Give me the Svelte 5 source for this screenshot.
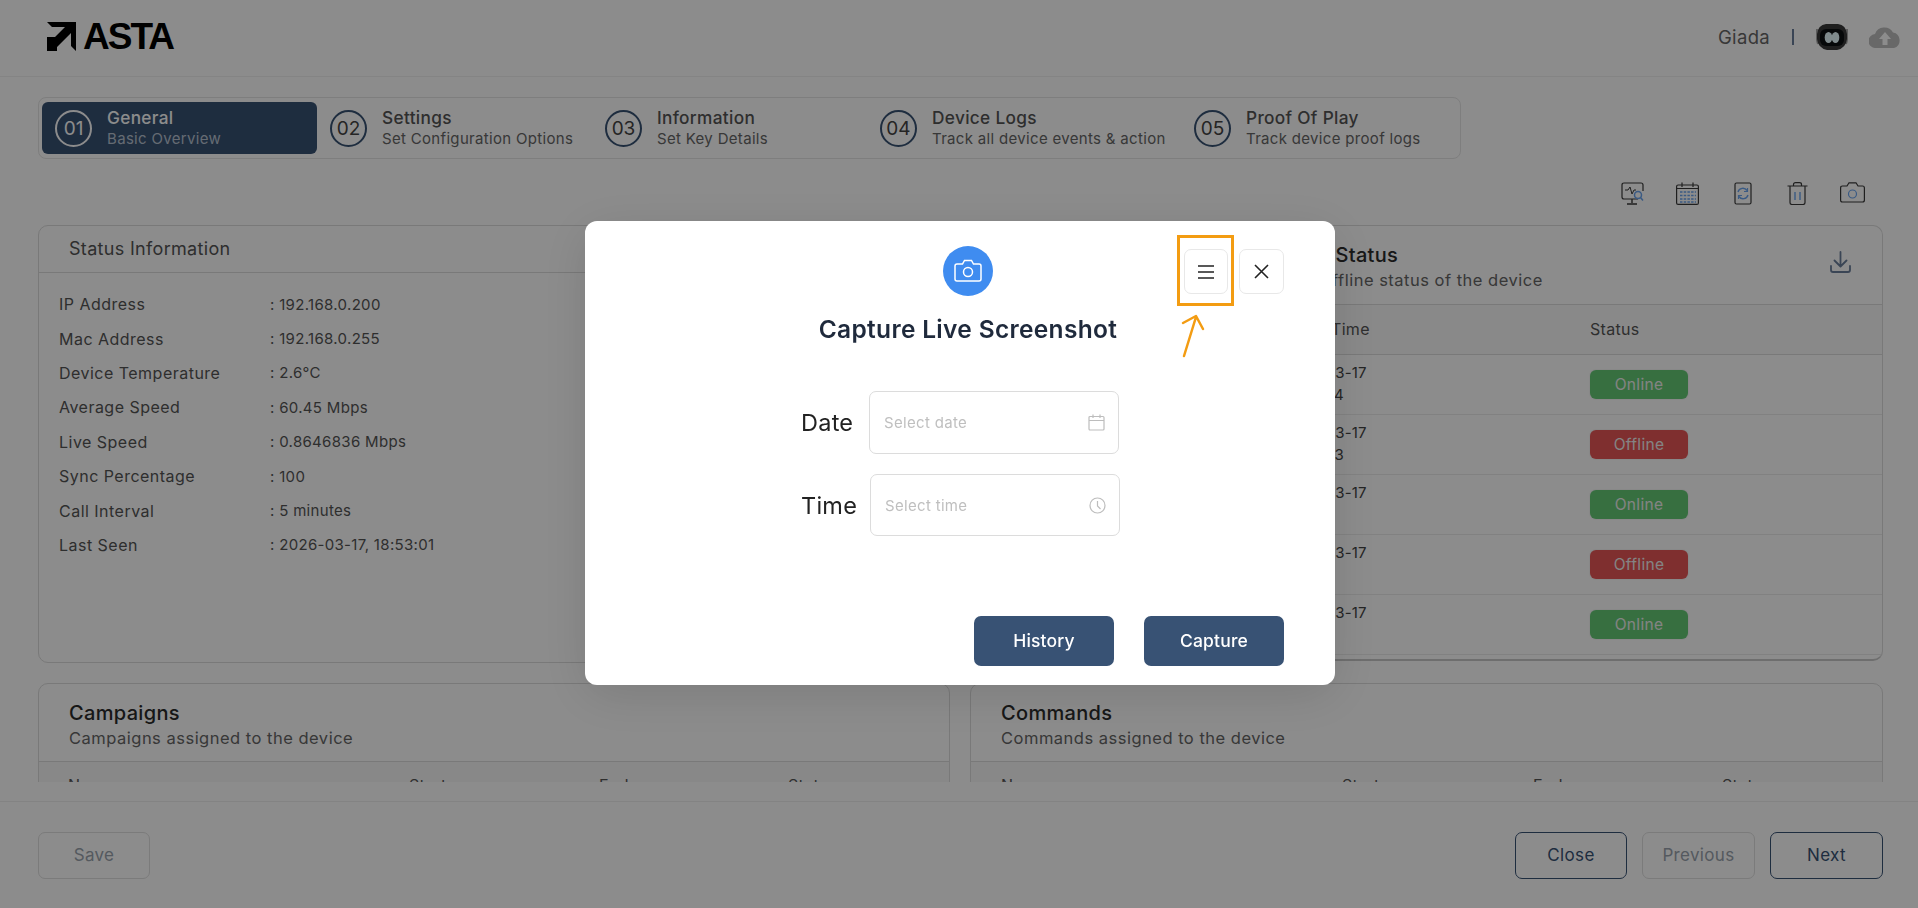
<script>
  const steps = [
    { n: '01', t: 'General', s: 'Basic Overview', w: 275, active: true },
    { n: '02', t: 'Settings', s: 'Set Configuration Options', w: 275 },
    { n: '03', t: 'Information', s: 'Set Key Details', w: 275 },
    { n: '04', t: 'Device Logs', s: 'Track all device events & action', w: 314 },
    { n: '05', t: 'Proof Of Play', s: 'Track device proof logs', w: 262 }
  ];
  const info = [
    ['IP Address', ': 192.168.0.200'],
    ['Mac Address', ': 192.168.0.255'],
    ['Device Temperature', ': 2.6°C'],
    ['Average Speed', ': 60.45 Mbps'],
    ['Live Speed', ': 0.8646836 Mbps'],
    ['Sync Percentage', ': 100'],
    ['Call Interval', ': 5 minutes'],
    ['Last Seen', ': 2026-03-17, 18:53:01']
  ];
  const rows = [
    { d: '2026-03-17', t: '18:53:04', on: true },
    { d: '2026-03-17', t: '18:48:03', on: false },
    { d: '2026-03-17', t: '18:43', on: true },
    { d: '2026-03-17', t: '18:38', on: false },
    { d: '2026-03-17', t: '18:33', on: true }
  ];
</script>

<div class="page">
  <header class="top">
    <div class="logo">
      <svg width="31" height="30" viewBox="0 0 31 30"><path d="M1 0H30V29L25 24V11L11 25V29H1V15H9L19 5H6Z" fill="#000"/></svg>
      <span class="brand">ASTA</span>
    </div>
    <div class="user">
      <span class="uname">Giada</span>
      <span class="sep"></span>
      <svg class="avatar" width="32" height="26" viewBox="0 0 32 26">
        <path d="M1 5 Q0 14 2 20 M31 5 Q32 14 30 20" stroke="#a8a8a8" stroke-width="2" fill="none"/>
        <path d="M10 0H22Q30 1 31 10V15Q30 24 21 26H11Q2 24 1 15V10Q2 1 10 0Z" fill="#3a3a3a"/>
        <rect x="4" y="5" width="24" height="17" rx="6" fill="#0c0f12"/>
        <ellipse cx="12.500" cy="13.500" rx="3.800" ry="5.500" fill="#e8fbff"/>
        <ellipse cx="19.500" cy="13.500" rx="3.800" ry="5.500" fill="#e8fbff"/>
      </svg>
      <svg class="cloud" width="32" height="22" viewBox="0 0 32 22">
        <path d="M7 22A7 7 0 0 1 6 8 10 10 0 0 1 24 6.500 8 8 0 0 1 25 22Z" fill="#bdbdbd"/>
        <path d="M16 6L22 13H18.500V19H13.500V13H10Z" fill="#fff"/>
      </svg>
    </div>
  </header>

  <main class="scroll">
    <nav class="stepper">
      {#each steps as s}
        <div class="step" class:active={s.active} style="width:{s.w}px">
          <span class="num">{s.n}</span>
          <span class="stxt"><b>{s.t}</b><small>{s.s}</small></span>
        </div>
      {/each}
    </nav>

    <div class="tools">
      <svg width="23" height="24" viewBox="0 0 23 24" fill="none" stroke="#3a3a3a" stroke-width="1.2">
        <path d="M17 17H3Q1 17 1 15V3Q1 1 3 1H20Q22 1 22 3V9"/>
        <path d="M4 8H7L9 5L11 12L13 8H15" stroke-width="1"/>
        <path d="M11 17V21M6 22H16" stroke-width="1.400"/>
        <circle cx="17" cy="13" r="3.500" stroke="#6aa5f0" stroke-width="1.500"/>
        <path d="M19.500 15.500L22 18.500" stroke="#6aa5f0" stroke-width="1.500"/>
      </svg>
      <svg width="23" height="23" viewBox="0 0 23 23" fill="none" stroke="#3a3a3a" stroke-width="1.200">
        <rect x="0.600" y="3" width="21.800" height="19.400" rx="1.500"/>
        <path d="M6 0.500V5M17 0.500V5M1 6.500H22"/>
        <g stroke="#6aa5f0" stroke-width="1.300" stroke-dasharray="2.500 1.200">
          <path d="M4 10H20M4 13.500H20M4 17H20M4 20H20" />
        </g>
      </svg>
      <svg width="18" height="23" viewBox="0 0 18 23" fill="none" stroke="#3a3a3a" stroke-width="1.200">
        <rect x="1" y="1" width="16" height="21" rx="1.500"/>
        <path d="M4 10A5 5 0 0 1 13 8.500M14 13A5 5 0 0 1 5 14.500" stroke="#6aa5f0" stroke-width="1.400"/>
        <path d="M13.500 6V9.500H10M4.500 17V13.500H8" stroke="#6aa5f0" stroke-width="1.200"/>
      </svg>
      <svg width="21" height="23" viewBox="0 0 21 23" fill="none" stroke="#3a3a3a" stroke-width="1.200">
        <path d="M0.500 4H20.500M3 4V20.500Q3 22.500 5 22.500H16Q18 22.500 18 20.500V4M6.500 4V2.500Q6.500 0.700 8.500 0.700H12.500Q14.500 0.700 14.500 2.500V4"/>
        <path d="M8 10V18M13 10V18" stroke="#6aa5f0" stroke-width="1.400"/>
      </svg>
      <svg width="25" height="21" viewBox="0 0 25 21" fill="none" stroke="#3a3a3a" stroke-width="1.200">
        <path d="M2.500 4H7L9 0.800H16L18 4H22.500Q24.400 4 24.400 6V18Q24.400 20 22.500 20H2.500Q0.600 20 0.600 18V6Q0.600 4 2.500 4Z"/>
        <circle cx="12.500" cy="12" r="4" stroke="#6aa5f0" stroke-width="1.200"/>
      </svg>
    </div>

    <div class="grid top-grid">
      <section class="card info">
        <h3 class="plain">Status Information</h3>
        <dl>
          {#each info as r}
            <div class="kv"><dt>{r[0]}</dt><dd>{r[1]}</dd></div>
          {/each}
        </dl>
      </section>

      <section class="card status">
        <div class="chead">
          <div class="ctext">
            <h3>Offline Status</h3>
            <p>Offline status of the device</p>
          </div>
          <svg class="dl" width="21" height="22" viewBox="0 0 21 22" fill="none" stroke="#6b7f9c" stroke-width="1.800" stroke-linecap="round" stroke-linejoin="round">
            <path d="M10.500 1V15M4.500 9.500L10.500 15.500L16.500 9.500M1 15V19Q1 21 3 21H18Q20 21 20 19V15"/>
          </svg>
        </div>
        <div class="thead"><span class="c1"></span><span class="c2">Time</span><span>Status</span></div>
        {#each rows as r}
          <div class="trow">
            <span class="c1"></span>
            <span class="c2 when">{r.d}<br />{r.t}</span>
            <span class="badge" class:off={!r.on}>{r.on ? 'Online' : 'Offline'}</span>
          </div>
        {/each}
      </section>
    </div>

    <div class="grid">
      <section class="card low">
        <div class="chead">
          <div class="ctext">
            <h3>Campaigns</h3>
            <p>Campaigns assigned to the device</p>
          </div>
        </div>
        <div class="lowhead a"><span>Name</span><span>Start</span><span>End</span><span>Status</span></div>
      </section>
      <section class="card low">
        <div class="chead">
          <div class="ctext">
            <h3>Commands</h3>
            <p>Commands assigned to the device</p>
          </div>
        </div>
        <div class="lowhead b"><span>Name</span><span>Start</span><span>End</span><span>Status</span></div>
      </section>
    </div>
  </main>

  <footer class="foot">
    <button class="btn ghost save">Save</button>
    <div class="right">
      <button class="btn close">Close</button>
      <button class="btn ghost prev">Previous</button>
      <button class="btn next">Next</button>
    </div>
  </footer>
</div>

<div class="overlay">
  <div class="modal">
    <div class="mtop">
      <span class="cam">
        <svg width="28" height="24" viewBox="0 0 28 24" fill="none" stroke="#fff" stroke-width="1.500">
          <path d="M3 5H8.500L10.500 1.500H17.500L19.500 5H25Q27 5 27 7V20Q27 22 25 22H3Q1 22 1 20V7Q1 5 3 5Z"/>
          <circle cx="14" cy="13" r="4.500"/>
        </svg>
      </span>
      <h2>Capture Live Screenshot</h2>
    </div>

    <div class="acts">
      <button class="sq menu" aria-label="Menu">
        <svg width="18" height="14" viewBox="0 0 18 14" stroke="#222" stroke-width="1.500"><path d="M1 1H17M1 7H17M1 13H17"/></svg>
      </button>
      <button class="sq" aria-label="Close">
        <svg width="15" height="15" viewBox="0 0 15 15" stroke="#222" stroke-width="1.600"><path d="M1 1L14 14M14 1L1 14"/></svg>
      </button>
    </div>

    <div class="form">
      <div class="frow date">
        <label for="d">Date</label>
        <div class="field" id="d">
          <span>Select date</span>
          <svg width="17" height="17" viewBox="0 0 17 17" fill="none" stroke="#bdbdbd" stroke-width="1.200"><rect x="1" y="2.500" width="15" height="13.500" rx="1"/><path d="M1 6.500H16M5 0.500V4M12 0.500V4"/></svg>
        </div>
      </div>
      <div class="frow time">
        <label for="t">Time</label>
        <div class="field" id="t">
          <span>Select time</span>
          <svg width="17" height="17" viewBox="0 0 17 17" fill="none" stroke="#bdbdbd" stroke-width="1.200"><circle cx="8.500" cy="8.500" r="7.500"/><path d="M8.500 4V9L11.500 12"/></svg>
        </div>
      </div>
    </div>

    <div class="mfoot">
      <button class="solid">History</button>
      <button class="solid">Capture</button>
    </div>

    <span class="mark"></span>
    <svg class="arrow" width="26" height="44" viewBox="0 0 26 44" fill="none" stroke="#f39c12" stroke-width="2.500" stroke-linecap="round" stroke-linejoin="round">
      <path d="M5 42L17 3M4 9L17 2L24 15"/>
    </svg>
  </div>
</div>

<style>
  :global(body) {
    margin: 0;
    background: #fff;
    font-family: Inter, "Liberation Sans", sans-serif;
    letter-spacing: 0.02em;
    color: #444;
    overflow: hidden;
  }
  .page { width: 1918px; height: 908px; display: flex; flex-direction: column; }
  .top {
    height: 77px;
    box-sizing: border-box;
    border-bottom: 1px solid #f0f0f0;
    display: flex;
    align-items: center;
    justify-content: space-between;
    padding: 0 17px 3px 46px;
  }
  .logo { display: flex; align-items: center; gap: 6px; }
  .brand { font: 700 37px "Liberation Sans", sans-serif; color: #000; letter-spacing: -2px; }
  .user { display: flex; align-items: center; }
  .uname { font-size: 18.500px; color: #666; }
  .sep { width: 2px; height: 16px; background: #6b7f9c; margin: 0 22px; }
  .avatar { margin-right: 21px; }

  .scroll { height: 705px; overflow: hidden; padding: 20px 35px 0 38px; box-sizing: border-box; }
  .stepper {
    width: 1423px;
    height: 62px;
    box-sizing: border-box;
    border: 1px solid #e6e6e6;
    border-radius: 8px;
    display: flex;
    padding: 4px 3px;
  }
  .step { display: flex; align-items: center; gap: 15px; padding-left: 13px; box-sizing: border-box; border-radius: 6px; color: #555; }
  .step.active { background: #385274; color: #fff; }
  .num {
    width: 37px; height: 37px; box-sizing: border-box; flex: none;
    border: 2px solid #385274; border-radius: 50%;
    display: flex; align-items: center; justify-content: center;
    font-size: 19px; color: #444; letter-spacing: 0;
  }
  .active .num { border-color: #fff; color: #fff; }
  .stxt { display: flex; flex-direction: column; }
  .stxt b { font-size: 17.250px; font-weight: 500; line-height: 21px; }
  .stxt small { font-size: 15px; line-height: 21px; color: #666; white-space: nowrap; }
  .active small { color: #b9c4d2; }

  .tools { height: 66px; display: grid; grid-template-columns: repeat(5, 55px); justify-items: center; align-items: start; padding: 23px 0 0 1567px; box-sizing: border-box; }

  .grid { display: grid; grid-template-columns: 912px 913px; gap: 20px; align-items: start; }
  .top-grid { margin-bottom: 20px; }
  .card { border: 1px solid #dcdcdc; border-radius: 10px; box-sizing: border-box; overflow: hidden; }
  h3 { margin: 0; font-size: 20px; font-weight: 500; color: #2b2b2b; line-height: 24px; white-space: nowrap; }
  h3.plain { height: 46px; line-height: 45px; padding-left: 30px; border-bottom: 1px solid #dcdcdc; color: #555; font-weight: 400; font-size: 18px; }
  .info { height: 438px; }
  dl { margin: 0; padding: 14px 0 0 20px; }
  .kv { display: flex; height: 34.400px; align-items: center; font-size: 15px; color: #555; }
  dt { width: 211px; font-size: 16px; letter-spacing: 0.03em; }
  dd { margin: 0; }

  .status { height: 436px; border-bottom-width: 2px; border-bottom-color: #c8c8c8; }
  .chead { height: 78px; box-sizing: border-box; border-bottom: 1px solid #dcdcdc; display: flex; justify-content: space-between; padding: 17px 0 0 30px; }
  .status .chead { height: 79px; padding-left: 0; padding-right: 31px; }
  .status .ctext h3 { padding-left: 293px; }
  .status .ctext p { padding-left: 348px; }
  .dl { margin-top: 8px; }
  .ctext p { margin: 0; font-size: 16.500px; letter-spacing: 0.03em; color: #666; line-height: 26px; white-space: nowrap; }
  .thead { height: 50px; background: #fafafa; border-bottom: 1px solid #dcdcdc; display: flex; align-items: center; font-size: 16px; color: #555; padding-bottom: 2px; box-sizing: border-box; }
  .c1 { width: 200px; flex: none; }
  .c2 { width: 419px; padding-left: 160px; box-sizing: border-box; flex: none; }
  .trow { height: 60px; box-sizing: border-box; border-bottom: 1px solid #ececec; display: flex; align-items: center; font-size: 15px; }
  .when { line-height: 22px; align-self: flex-start; padding-top: 7px; padding-left: 110px; letter-spacing: 0.01em; }
  .badge {
    width: 98px; height: 29px; border-radius: 6px; background: #64cb76; color: #f0f0f0;
    display: flex; align-items: center; justify-content: center; font-size: 15.500px;
    padding-bottom: 1px; box-sizing: border-box;
    box-shadow: 0 0 0 1px rgba(0,0,0,0.03);
  }
  .badge.off { background: #e85656; }

  .low { height: 200px; }
  .lowhead { display: grid; background: #f7f7f7; height: 60px; padding: 13px 0 0 29px; font-size: 16px; color: #555; }
  .lowhead.a { grid-template-columns: 341px 190px 189px 1fr; }
  .lowhead.b { grid-template-columns: 341px 191px 189px 1fr; padding-left: 30px; }

  .foot {
    height: 107px; flex: none; margin-top: 19px; box-sizing: border-box;
    border-top: 1px solid #eee;
    display: flex; justify-content: space-between;
    padding: 30px 35px 0 38px;
  }
  .right { display: flex; gap: 15px; }
  .btn { height: 47px; padding: 0 0 2px; border: 1px solid #385274; border-radius: 7px; background: #fff; font: 400 17px Inter, sans-serif; letter-spacing: 0.02em; color: #385274; }
  .btn.ghost { border-color: #e0e0e0; color: #9aa3ad; }
  .save { width: 112px; }
  .close { width: 112px; }
  .prev { width: 113px; }
  .next { width: 113px; }

  .overlay {
    position: fixed; inset: 0;
    background: rgba(0, 0, 0, 0.45);
    display: flex; align-items: center; justify-content: center;
    padding: 0 0 2px 2px;
    box-sizing: border-box;
  }
  .modal {
    position: relative;
    width: 750px; height: 464px;
    background: #fff; border-radius: 12px;
    box-shadow: 0 10px 50px rgba(0,0,0,0.12);
    box-sizing: border-box;
    padding: 25px 51px 19px;
    display: flex; flex-direction: column;
  }
  .mtop { display: flex; flex-direction: column; align-items: center; padding-left: 16px; }
  .cam { width: 50px; height: 50px; border-radius: 50%; background: #3f8cf0; display: flex; align-items: center; justify-content: center; }
  h2 { margin: 15px 0 0; font-size: 24.500px; font-weight: 600; color: #1f2a3c; line-height: 36px; white-space: nowrap; }
  .acts { position: absolute; top: 28px; right: 51px; display: flex; gap: 11px; }
  .sq { width: 45px; height: 45px; padding: 0; background: #fff; border: 1px solid #e8e8e8; border-radius: 7px; display: flex; align-items: center; justify-content: center; }
  .sq.menu { width: 44px; }
  .form { margin-top: 44px; display: flex; flex-direction: column; gap: 20px; }
  .frow { display: flex; align-items: center; padding-left: 165px; }
  .frow label { font-size: 23.500px; color: #222; letter-spacing: 0.01em; }
  .date label { width: 68px; }
  .time label { width: 69px; }
  .field {
    width: 250px; box-sizing: border-box;
    border: 1px solid #dcdcdc; border-radius: 7px;
    display: flex; align-items: center; justify-content: space-between;
    padding: 0 13px 0 14px; font-size: 15px; color: #bfbfbf;
  }
  .date .field { height: 63px; }
  .time .field { height: 62px; }
  .mfoot { margin-top: auto; display: flex; justify-content: flex-end; gap: 30px; }
  .solid { width: 140px; height: 50px; padding: 0 0 2px; border: 0; border-radius: 7px; background: #385274; color: #fff; font: 500 17.500px Inter, sans-serif; letter-spacing: 0.01em; }
  .mark { position: absolute; left: 592px; top: 14px; width: 57px; height: 71px; box-sizing: border-box; border: 3px solid #f39c12; }
  .arrow { position: absolute; left: 594px; top: 93px; }
</style>
